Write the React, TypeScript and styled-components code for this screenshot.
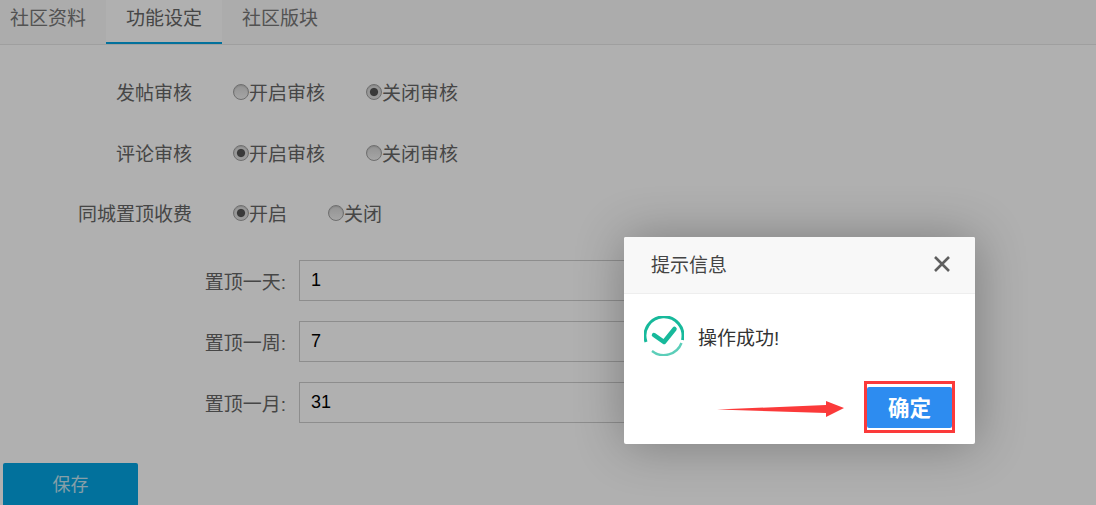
import React from "react";
import styled, { createGlobalStyle } from "styled-components";

const GlobalStyle = createGlobalStyle`
  html, body { margin: 0; padding: 0; background: #fff; }
  body {
    width: 1096px; height: 505px; overflow: hidden;
    font-family: "Liberation Sans", "Noto Sans CJK SC", sans-serif;
    color: #666;
  }
`;

const Page = styled.div`
  position: relative;
  width: 1096px;
  height: 505px;
  overflow: hidden;
`;

const TabBar = styled.div`
  background: #f9f9f9;
`;

const Tabs = styled.nav`
  display: flex;
  height: 44px;
  border-bottom: 1px solid #e6e6e6;
`;

const Tab = styled.div<{ $active?: boolean; $first?: boolean }>`
  box-sizing: border-box;
  height: 44px;
  padding: 0 20px 0 ${(p) => (p.$first ? "10px" : "20px")};
  line-height: 38px;
  font-size: 19px;
  color: ${(p) => (p.$active ? "#666" : "#777")};
  background: ${(p) => (p.$active ? "#fff" : "transparent")};
  border-bottom: 2px solid ${(p) => (p.$active ? "#03a4e2" : "transparent")};
`;

const Form = styled.form`
  display: flex;
  flex-direction: column;
  padding-top: 16px;
`;

const RadioRow = styled.div<{ $tight?: boolean }>`
  display: flex;
  align-items: center;
  height: 61px;
  margin-top: ${(p) => (p.$tight ? "-1px" : "0")};
`;

const RowLabel = styled.span`
  box-sizing: border-box;
  width: 233px;
  padding-right: 41px;
  text-align: right;
  font-size: 19px;
  white-space: nowrap;
`;

const Choice = styled.label`
  display: flex;
  align-items: center;
  font-size: 19px;
  margin-right: 41px;
  white-space: nowrap;
`;

const Radio = styled.input.attrs({ type: "radio", readOnly: true })`
  appearance: none;
  box-sizing: border-box;
  width: 16px;
  height: 16px;
  margin: 0;
  border-radius: 50%;
  border: 1px solid #a0a0a0;
  background: linear-gradient(#d6d6d6, #efefef);
  box-shadow: inset 0 1px 1px #c0c0c0;

  &:checked {
    background: radial-gradient(circle, #555 0 3.6px, #dedede 4.6px);
  }
`;

const FieldList = styled.div`
  display: flex;
  flex-direction: column;
  gap: 20px;
  margin-top: 17px;
`;

const FieldRow = styled.div`
  display: flex;
  align-items: center;
  height: 41px;
`;

const FieldLabel = styled.span`
  box-sizing: border-box;
  width: 299px;
  padding-right: 13px;
  text-align: right;
  font-size: 19px;
  white-space: nowrap;
`;

const Input = styled.input.attrs({ readOnly: true })`
  box-sizing: border-box;
  width: 400px;
  height: 41px;
  padding: 0 11px;
  border: 1px solid #ccc;
  font: 18px "Liberation Sans", sans-serif;
  color: #000;
  background: #fff;
  outline: none;
`;

const SaveButton = styled.button.attrs({ type: "button" })`
  width: 135px;
  height: 48px;
  margin: 40px 0 0 3px;
  padding: 0 0 9px;
  border: 0;
  border-radius: 2px;
  background: #03a4e2;
  color: #c4e6f4;
  font: 18px "Noto Sans CJK SC", sans-serif;
`;

const Overlay = styled.div`
  position: absolute;
  inset: 0;
  background: rgba(0, 0, 0, 0.31);
`;

const Dialog = styled.section`
  position: absolute;
  left: 624px;
  top: 237px;
  width: 351px;
  height: 207px;
  display: flex;
  flex-direction: column;
  border-radius: 2px;
  background: #fff;
  box-shadow: 1px 1px 50px rgba(0, 0, 0, 0.3);
`;

const DialogHeader = styled.header`
  box-sizing: border-box;
  display: flex;
  align-items: center;
  justify-content: space-between;
  height: 57px;
  padding: 0 24px 3px 27px;
  background: #f8f8f8;
  border-bottom: 1px solid #eee;
  border-radius: 2px 2px 0 0;
  font-size: 19px;
  color: #444;
`;

const DialogBody = styled.div`
  display: flex;
  align-items: center;
  gap: 14px;
  height: 42px;
  margin-top: 21px;
  padding-left: 20px;
  font-size: 19px;
  color: #333;
`;

const DialogFooter = styled.footer`
  display: flex;
  justify-content: flex-end;
  padding: 30px 23px 0 0;
`;

const OkButton = styled.button.attrs({ type: "button" })`
  width: 85px;
  height: 41px;
  padding: 0 0 3px;
  border: 0;
  border-radius: 2px;
  background: #2d8cf0;
  color: #fff;
  font: bold 21.5px "Noto Sans CJK SC", sans-serif;
`;

const Highlight = styled.div`
  position: absolute;
  left: 240px;
  top: 144px;
  width: 91px;
  height: 52px;
  box-sizing: border-box;
  border: 3px solid #fb3a3a;
`;

const Arrow = styled.svg`
  position: absolute;
  left: 93px;
  top: 163px;
`;

const FIELDS = [
  { label: "置顶一天:", value: "1" },
  { label: "置顶一周:", value: "7" },
  { label: "置顶一月:", value: "31" },
];

export default function App() {
  return (
    <Page>
      <GlobalStyle />
      <TabBar>
        <Tabs>
          <Tab $first>社区资料</Tab>
          <Tab $active>功能设定</Tab>
          <Tab>社区版块</Tab>
        </Tabs>
      </TabBar>
      <Form>
        <RadioRow>
          <RowLabel>发帖审核</RowLabel>
          <Choice><Radio name="a" />开启审核</Choice>
          <Choice><Radio name="a" defaultChecked />关闭审核</Choice>
        </RadioRow>
        <RadioRow>
          <RowLabel>评论审核</RowLabel>
          <Choice><Radio name="b" defaultChecked />开启审核</Choice>
          <Choice><Radio name="b" />关闭审核</Choice>
        </RadioRow>
        <RadioRow $tight>
          <RowLabel>同城置顶收费</RowLabel>
          <Choice><Radio name="c" defaultChecked />开启</Choice>
          <Choice><Radio name="c" />关闭</Choice>
        </RadioRow>
        <FieldList>
          {FIELDS.map((r) => (
            <FieldRow key={r.label}>
              <FieldLabel>{r.label}</FieldLabel>
              <Input defaultValue={r.value} />
            </FieldRow>
          ))}
        </FieldList>
        <SaveButton>保存</SaveButton>
      </Form>
      <Overlay />
      <Dialog>
        <DialogHeader>
          提示信息
          <svg width="18" height="18" viewBox="0 0 18 18" fill="none" stroke="#5f5f5f" strokeWidth="2.6">
            <path d="M2 2l14 14M16 2L2 16" />
          </svg>
        </DialogHeader>
        <DialogBody>
          <svg width="40" height="40" viewBox="0 0 40 40" fill="none" stroke="#17b99b">
            <path d="M2 26A19 19 0 1 1 38.500 24" strokeWidth="3" />
            <path d="M37.500 27A19 19 0 0 1 8 35" strokeWidth="2.400" opacity="0.7" />
            <path d="M10 19l10 7L30.500 13" strokeWidth="4.500" strokeLinecap="round" strokeLinejoin="round" />
          </svg>
          操作成功!
        </DialogBody>
        <DialogFooter>
          <OkButton>确定</OkButton>
        </DialogFooter>
        <Highlight />
        <Arrow width="128" height="18" viewBox="0 0 128 18">
          <polygon points="0,9.500 109,5 109,1 127,8 109,17 109,13" fill="#fb3a3a" />
        </Arrow>
      </Dialog>
    </Page>
  );
}
